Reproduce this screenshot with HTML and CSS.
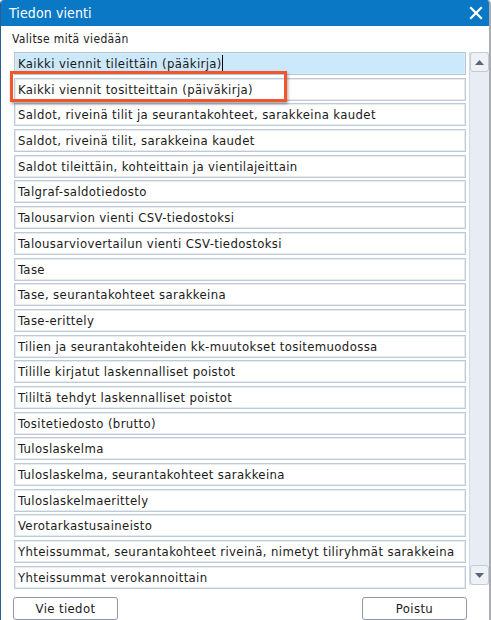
FILE: index.html
```html
<!DOCTYPE html>
<html>
<head>
<meta charset="utf-8">
<link rel="stylesheet" href="styles.css">
</head>
<body>
<div class="window">
  <div class="titlebar">
    <span class="title">Tiedon vienti</span>
    <svg class="close" width="14" height="14" viewBox="0 0 14 14"><path d="M2 2 L12 12 M12 2 L2 12" stroke="#fff" stroke-width="2.2" stroke-linecap="square"/></svg>
  </div>
  <div class="body">
    <div class="label">Valitse mitä viedään</div>
    <div class="listwrap">
      <div class="list">
        <div class="row selected">Kaikki viennit tileittäin (pääkirja)<span class="caret"></span></div>
        <div class="row">Kaikki viennit tositteittain (päiväkirja)</div>
        <div class="row">Saldot, riveinä tilit ja seurantakohteet, sarakkeina kaudet</div>
        <div class="row">Saldot, riveinä tilit, sarakkeina kaudet</div>
        <div class="row">Saldot tileittäin, kohteittain ja vientilajeittain</div>
        <div class="row">Talgraf-saldotiedosto</div>
        <div class="row">Talousarvion vienti CSV-tiedostoksi</div>
        <div class="row">Talousarviovertailun vienti CSV-tiedostoksi</div>
        <div class="row">Tase</div>
        <div class="row">Tase, seurantakohteet sarakkeina</div>
        <div class="row">Tase-erittely</div>
        <div class="row">Tilien ja seurantakohteiden kk-muutokset tositemuodossa</div>
        <div class="row">Tilille kirjatut laskennalliset poistot</div>
        <div class="row">Tililtä tehdyt laskennalliset poistot</div>
        <div class="row">Tositetiedosto (brutto)</div>
        <div class="row">Tuloslaskelma</div>
        <div class="row">Tuloslaskelma, seurantakohteet sarakkeina</div>
        <div class="row">Tuloslaskelmaerittely</div>
        <div class="row">Verotarkastusaineisto</div>
        <div class="row">Yhteissummat, seurantakohteet riveinä, nimetyt tiliryhmät sarakkeina</div>
        <div class="row">Yhteissummat verokannoittain</div>
        <div class="highlight"></div>
      </div>
      <div class="scrollbar">
        <div class="sbtn"><svg width="9" height="5" viewBox="0 0 9 5"><path d="M0 5 L4.5 0 L9 5 Z" fill="#5a6478"/></svg></div>
        <div class="strack"></div>
        <div class="sbtn"><svg width="9" height="5" viewBox="0 0 9 5"><path d="M0 0 L4.5 5 L9 0 Z" fill="#5a6478"/></svg></div>
      </div>
    </div>
    <div class="buttons">
      <div class="btn">Vie tiedot</div>
      <div class="btn">Poistu</div>
    </div>
  </div>
</div>
</body>
</html>
```

FILE: styles.css
```css
html, body {
  margin: 0;
  padding: 0;
  background: #fff;
}
.window {
  width: 491px;
  height: 620px;
  box-sizing: border-box;
  border-left: 1px solid #2a5e8e;
  border-right: 2px solid #a9acb0;
  border-top-left-radius: 4px;
  border-top-right-radius: 4px;
  overflow: hidden;
  font-family: "DejaVu Sans Condensed", "DejaVu Sans", sans-serif;
  font-size: 13px;
  letter-spacing: 0.37px;
  color: #1a1a1a;
  display: flex;
  flex-direction: column;
}
.titlebar {
  height: 26px;
  flex: none;
  background: #0a78c4;
  display: flex;
  align-items: center;
  justify-content: space-between;
  padding: 0 6px 0 8px;
}
.title {
  color: #fff;
  font-size: 14px;
  letter-spacing: 0.1px;
}
.close {
  display: block;
}
.body {
  flex: 1;
  padding: 4px 0 0 11px;
  display: flex;
  flex-direction: column;
}
.label {
  font-size: 12px;
  letter-spacing: 0.35px;
  height: 18px;
  line-height: 18px;
  color: #222;
}
.listwrap {
  margin-top: 4px;
  display: flex;
  gap: 3px;
  padding-left: 2px;
}
.list {
  position: relative;
  width: 453px;
  display: flex;
  flex-direction: column;
  gap: 2.7px;
}
.row {
  height: 23px;
  box-sizing: border-box;
  border: 1px solid #c0cad6;
  box-shadow: inset 0 0 0 1px #e6ebf1;
  background: #fff;
  padding-left: 3px;
  line-height: 21px;
  white-space: nowrap;
  overflow: hidden;
}
.row.selected {
  background: #cce8fb;
  border-color: #b2c6d8;
  box-shadow: inset 0 0 0 1px #d8ecfa;
}
.caret {
  display: inline-block;
  width: 1px;
  height: 16px;
  background: #000;
  vertical-align: -3px;
}
.highlight {
  position: absolute;
  left: -4px;
  top: 19px;
  width: 271px;
  height: 25px;
  border: 3px solid #f2552c;
  box-shadow: 1px 2px 3px rgba(0,0,0,0.35);
}
.scrollbar {
  width: 19px;
  height: 533px;
  background: #e8edf5;
  border-left: 1px solid #d4dae3;
  display: flex;
  flex-direction: column;
}
.sbtn {
  height: 20px;
  box-sizing: border-box;
  border: 1px solid #c4cad3;
  border-radius: 3px;
  background: #eef1f6;
  display: flex;
  align-items: center;
  justify-content: center;
}
.strack {
  flex: 1;
}
.buttons {
  margin-top: 8px;
  display: flex;
  justify-content: space-between;
  padding-left: 1px;
  padding-right: 22px;
}
.btn {
  width: 105px;
  height: 23px;
  box-sizing: border-box;
  border: 1px solid #8e98a6;
  border-radius: 3px;
  background: #fff;
  text-align: center;
  line-height: 21px;
  font-size: 13px;
}
```
